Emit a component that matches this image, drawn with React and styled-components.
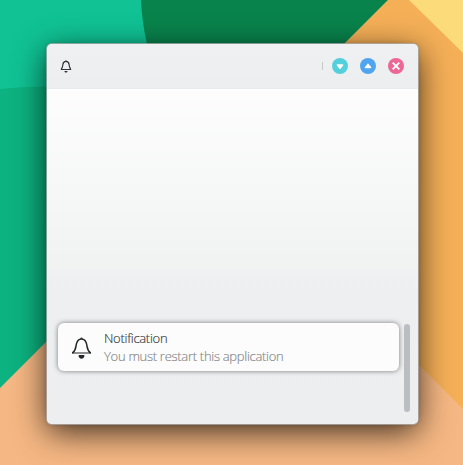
import React from 'react';
import styled, { createGlobalStyle } from 'styled-components';

const GlobalStyle = createGlobalStyle`
  * { box-sizing: border-box; }
  body { margin: 0; overflow: hidden; }
`;

const Desktop = styled.main`
  position: relative;
  isolation: isolate;
  width: 463px;
  height: 465px;
  padding: 44px 45px 41px 47px;
  overflow: hidden;
  font-family: 'Open Sans', 'Noto Sans', sans-serif;
`;

const WallpaperArt = styled.svg`
  position: absolute;
  inset: 0;
  z-index: -1;
`;

const Window = styled.section`
  display: flex;
  flex-direction: column;
  height: 380px;
  border-radius: 5px;
  background: #edeef0;
  overflow: hidden;
  box-shadow:
    0 0 0 1px rgba(175, 175, 175, 0.75),
    0 0 5px rgba(0, 0, 0, 0.2),
    0 8px 32px rgba(0, 0, 0, 0.75);
`;

const TitleBar = styled.header`
  display: flex;
  align-items: center;
  justify-content: space-between;
  height: 45px;
  padding: 0 14px 1px 13px;
  background: linear-gradient(#eff0f2, #edeef0);
  border-bottom: 1px solid #eaebec;
`;

const WindowControls = styled.div`
  display: flex;
  align-items: center;
  gap: 12px;
`;

const Separator = styled.span`
  width: 1px;
  height: 8px;
  margin-right: -3px;
  background: #c3cbc6;
`;

const ControlButton = styled.button`
  display: grid;
  place-items: center;
  width: 16px;
  height: 16px;
  padding: 0;
  border: 0;
  border-radius: 50%;
  background: ${({ $color }) => $color};

  svg { display: block; }
`;

const Content = styled.div`
  display: flex;
  flex: 1;
  align-items: flex-end;
  gap: 5px;
  padding: 0 8px 12px 11px;
  background: linear-gradient(#fcfdfc 0%, #f7f8f8 26%, #f1f2f2 52%, #eeeff1 59%, #edeef0 100%);
`;

const NotificationCard = styled.article`
  display: flex;
  align-items: center;
  flex: 1;
  height: 48px;
  margin-bottom: 41px;
  padding-left: 13px;
  gap: 12px;
  border-radius: 6px;
  background: #fcfcfc;
  box-shadow: 0 0 5px rgba(0, 0, 0, 0.5);
`;

const Message = styled.div`
  display: flex;
  flex-direction: column;
  font-size: 13px;
  letter-spacing: -0.29px;
  line-height: 18px;
  font-weight: 300;
  white-space: nowrap;
`;

const Title = styled.span`
  color: #34373a;
  -webkit-text-stroke: 0.15px #34373a;
`;

const Body = styled.span`
  color: #858789;
  -webkit-text-stroke: 0.15px #858789;
`;

const ScrollThumb = styled.div`
  width: 6px;
  height: 88px;
  border-radius: 3px;
  background: #bbbec0;
`;

const Icon = styled.svg`
  display: block;
  overflow: visible;
`;

function SmallBell() {
  return (
    <Icon width="12" height="14" viewBox="0 0 12 14" fill="none">
      <path d="M1.200 10.1C2.700 9 2.700 7.400 2.900 5.500C3.100 3.500 4.200 2.400 6 2.400S8.900 3.500 9.100 5.500C9.300 7.400 9.300 9 10.800 10.1" stroke="#313437" strokeWidth="1.2" />
      <path d="M.8 10.500h10.400" stroke="#313437" strokeWidth="1.1" />
      <path d="M5.100 2.400L6 .9L6.900 2.400Z" fill="#313437" />
      <path d="M4.400 12h3.200c-.2 1-.8 1.500-1.600 1.500s-1.400-.5-1.600-1.500Z" fill="#313437" />
    </Icon>
  );
}

function LargeBell() {
  return (
    <Icon width="21" height="24" viewBox="0 0 21 24" fill="none">
      <g transform="translate(0 .6)">
        <path d="M1.300 17.500C4.800 14.800 4.600 12.600 5.300 8.800C6 5.200 7.500 3.300 10.500 3.300S15 5.200 15.700 8.800C16.400 12.600 16.200 14.800 19.700 17.500" stroke="#232629" strokeWidth="1.5" />
        <path d="M1 17.400h19" stroke="#232629" strokeWidth="1.2" />
        <path d="M9 3.200Q10.500.6 12 3.200Z" fill="#232629" />
        <path d="M7.700 19.500h5.600v1.200c-.3 1.600-1.300 2.400-2.800 2.400s-2.500-.8-2.800-2.400Z" fill="#232629" />
      </g>
    </Icon>
  );
}

function Wallpaper() {
  return (
    <WallpaperArt width="463" height="465" viewBox="0 0 463 465" aria-hidden="true">
      <path fill="#0cb27f" d="M0 0h463v465H0z" />
      <path fill="#10c294" d="M0 0h141q1 22 6 44L150 90Q60 83 0 89Z" />
      <path fill="#09834c" d="M141 0h247L160 228Q153 75 147 44Q142 22 141 0Z" />
      <path fill="#f5af57" d="M388 0h75v465H200V188Z" />
      <path fill="#fbdb7a" d="M409 0h54v53Z" />
      <path fill="#f5b783" d="M0 388L160 228h122L463 409v56H0Z" />
    </WallpaperArt>
  );
}

export default function App() {
  return (
    <>
      <GlobalStyle />
      <Desktop>
        <Wallpaper />
        <Window>
          <TitleBar>
            <SmallBell />
            <WindowControls>
              <Separator />
              <ControlButton $color="#54d0dc" aria-label="Minimize">
                <svg width="16" height="16"><path d="M5.500 7h5L8 10.200Z" fill="#fff" stroke="#fff" strokeWidth="1.600" strokeLinejoin="round" /></svg>
              </ControlButton>
              <ControlButton $color="#51a5ee" aria-label="Maximize">
                <svg width="16" height="16"><path d="M5.500 9.500h5L8 6.400Z" fill="#fff" stroke="#fff" strokeWidth="1.600" strokeLinejoin="round" /></svg>
              </ControlButton>
              <ControlButton $color="#ed6796" aria-label="Close">
                <svg width="16" height="16"><path d="M4.700 4.700l6.600 6.600M11.300 4.700l-6.600 6.600" stroke="#fff" strokeWidth="1.900" /></svg>
              </ControlButton>
            </WindowControls>
          </TitleBar>
          <Content>
            <NotificationCard>
              <LargeBell />
              <Message>
                <Title>Notification</Title>
                <Body>You must restart this application</Body>
              </Message>
            </NotificationCard>
            <ScrollThumb />
          </Content>
        </Window>
      </Desktop>
    </>
  );
}
